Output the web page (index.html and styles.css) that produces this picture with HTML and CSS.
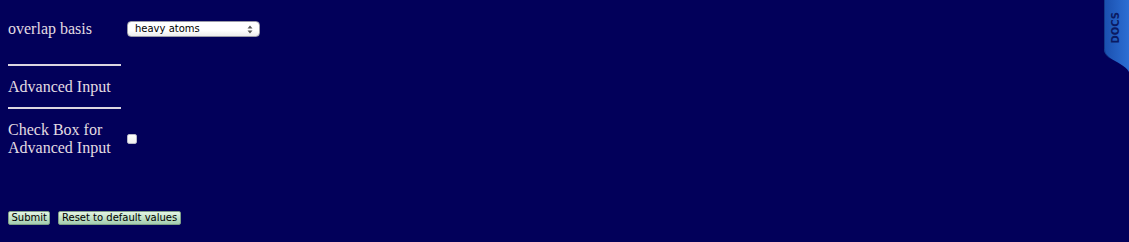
FILE: index.html
```html
<!DOCTYPE html>
<html>
<head>
<meta charset="utf-8">
<link rel="stylesheet" href="styles.css">
</head>
<body>
<form class="form">
  <div class="row row-first">
    <div class="label">overlap basis</div>
    <div class="select-wrap">
      <select class="select">
        <option>heavy atoms</option>
      </select>
      <svg class="arrows" width="6" height="9" viewBox="0 0 6 9"><path d="M3 0.5 L5.5 3.5 L0.5 3.5 Z M3 8.5 L5.5 5.5 L0.5 5.5 Z" fill="#555"/></svg>
    </div>
  </div>
  <div class="rule rule-1"></div>
  <div class="label heading">Advanced Input</div>
  <div class="rule rule-2"></div>
  <div class="row row-check">
    <div class="label">Check Box for Advanced Input</div>
    <input type="checkbox" class="check">
  </div>
  <div class="buttons">
    <button type="button" class="btn">Submit</button>
    <button type="button" class="btn">Reset to default values</button>
  </div>
</form>
<div class="docs">
  <svg class="docs-shape" width="25" height="72" viewBox="0 0 25 72">
    <defs>
      <linearGradient id="g" x1="0" y1="0" x2="1" y2="0">
        <stop offset="0" stop-color="#1a4fae"/>
        <stop offset="1" stop-color="#2c6fd4"/>
      </linearGradient>
    </defs>
    <path d="M0 0 H25 V72 C22 66 12 62 6 58 C2 55 0 53 0 48 Z" fill="url(#g)"/>
    <path d="M0.5 0 V48 C0.5 53 2 55 6 58" fill="none" stroke="#123a8a" stroke-width="1"/>
  </svg>
  <span class="docs-text">DOCS</span>
</div>
</body>
</html>
```
FILE: styles.css
```css
html, body {
  margin: 0;
  padding: 0;
}
body {
  background: #02005a;
  width: 1129px;
  height: 242px;
  overflow: hidden;
  position: relative;
  font-family: "Liberation Serif", "Times New Roman", serif;
  font-size: 16px;
  color: #e2dce2;
}
.form {
  display: flex;
  flex-direction: column;
  align-items: flex-start;
  padding: 20px 8px 0 8px;
}
.row {
  display: flex;
  align-items: center;
}
.row-first {
  height: 18px;
}
.label {
  width: 119px;
  line-height: 18px;
}
.heading {
  margin-top: 12px;
}
.rule {
  width: 113px;
  height: 2px;
  background: #dcd6e0;
}
.rule-1 {
  margin-top: 26px;
}
.rule-2 {
  margin-top: 11px;
}
.row-check {
  margin-top: 12px;
}
.select-wrap {
  position: relative;
  display: flex;
}
.select {
  -webkit-appearance: none;
  appearance: none;
  width: 133px;
  height: 16px;
  margin: 0;
  padding: 0 0 0 7px;
  border: 1px solid #9a9aa8;
  border-radius: 4px;
  background: linear-gradient(#ffffff, #ffffff 60%, #ececec);
  font-family: "DejaVu Sans", sans-serif;
  font-size: 10px;
  line-height: 14px;
  color: #000;
  box-sizing: border-box;
}
.arrows {
  position: absolute;
  right: 7px;
  top: 4px;
  pointer-events: none;
}
.check {
  -webkit-appearance: none;
  appearance: none;
  width: 10px;
  height: 10px;
  margin: 0;
  border: 1px solid #b8b8c8;
  border-radius: 2px;
  background: linear-gradient(#ffffff, #f0f0f0);
  box-sizing: border-box;
}
.buttons {
  display: flex;
  gap: 8px;
  margin-top: 54px;
}
.btn {
  margin: 0;
  height: 14px;
  padding: 0 2.5px;
  border: 1px solid #7f9f88;
  border-radius: 2px;
  background: linear-gradient(#e4f4e4, #c2e2c8 50%, #a4ccb0);
  font-family: "DejaVu Sans", sans-serif;
  font-size: 10px;
  line-height: 12px;
  color: #000;
  box-sizing: border-box;
}
.docs {
  position: absolute;
  top: 0;
  right: 0;
  width: 25px;
  height: 72px;
}
.docs-shape {
  display: block;
}
.docs-text {
  position: absolute;
  top: 12px;
  left: 6px;
  writing-mode: vertical-rl;
  transform: rotate(180deg);
  font-family: "DejaVu Sans", sans-serif;
  font-weight: bold;
  font-size: 10px;
  color: #0a1a62;
}
```
